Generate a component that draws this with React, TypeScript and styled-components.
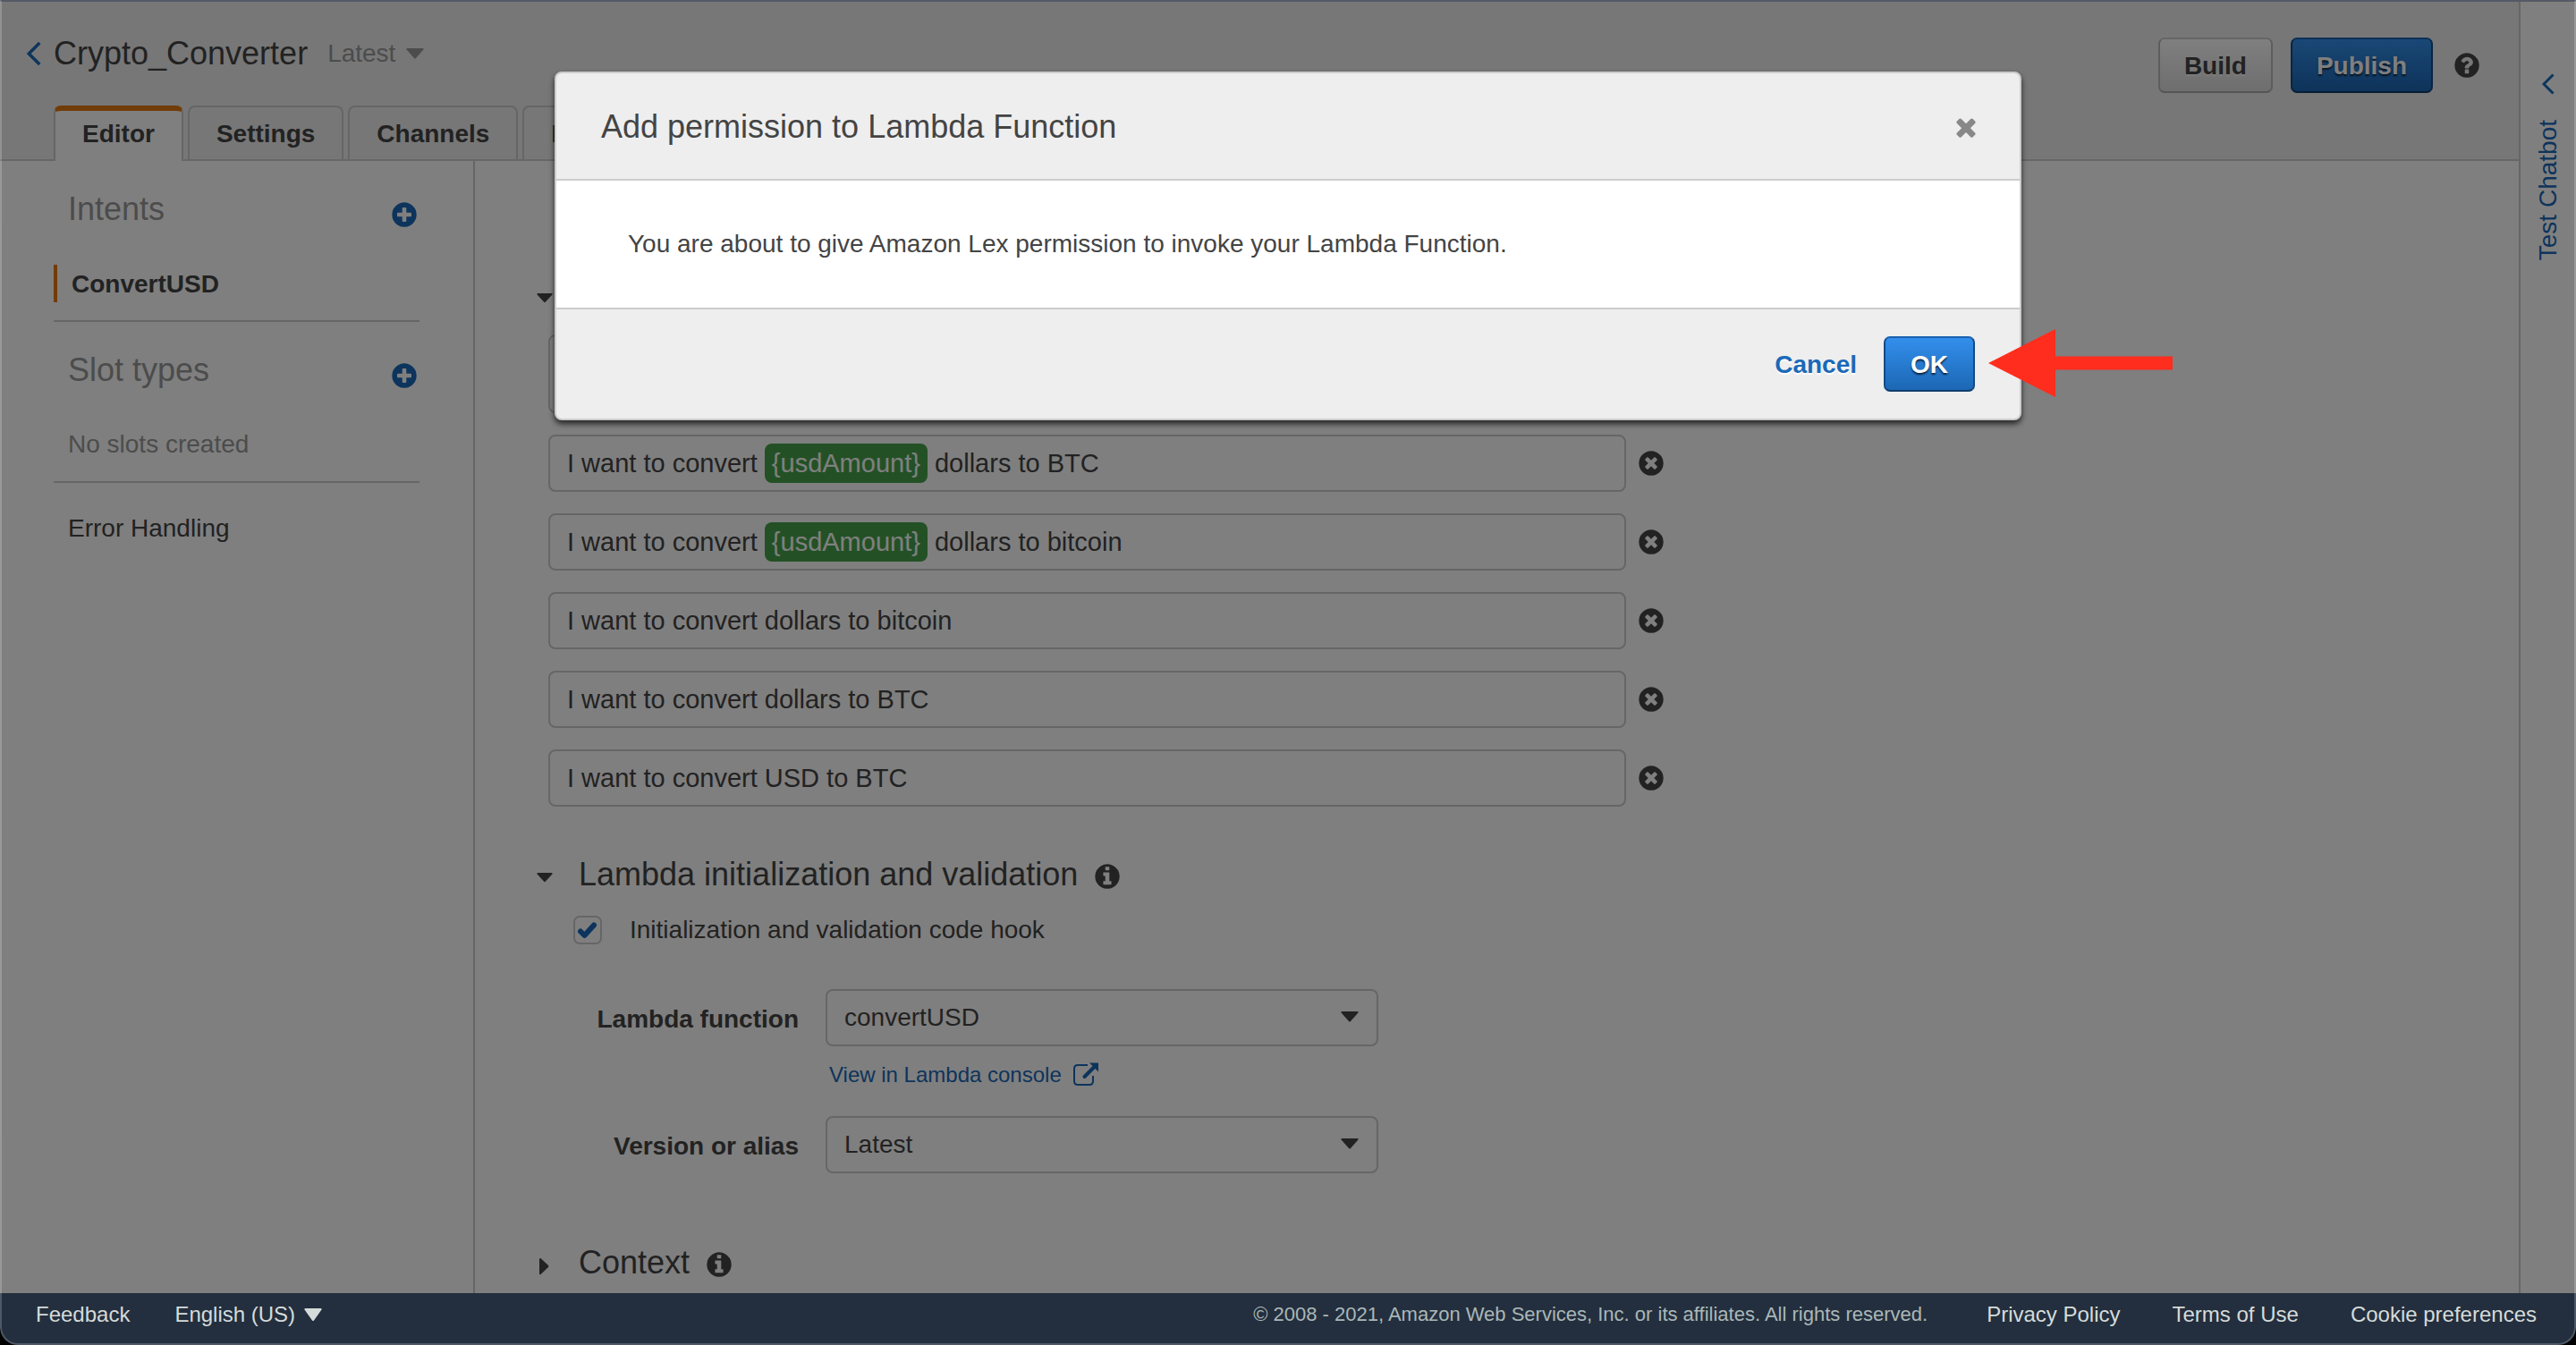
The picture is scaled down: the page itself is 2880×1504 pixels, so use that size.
import React from 'react';
import styled, { createGlobalStyle, css } from 'styled-components';

const color = {
  text: '#444444',
  muted: '#999999',
  line: '#cccccc',
  panel: '#eeeeee',
  link: '#1a69b8',
  orange: '#e47911',
  token: '#46a34a',
  footer: '#232f3e',
  footerText: '#d5dbdb',
};

const GlobalStyle = createGlobalStyle`
  *, *::before, *::after { box-sizing: border-box; }
  html, body { margin: 0; background: #000; }
  body {
    font-family: "Liberation Sans", Arial, Helvetica, sans-serif;
    font-size: 28px;
    color: ${color.text};
  }
  button, input, select, textarea { font: inherit; color: inherit; margin: 0; }
  h1, h2, p { margin: 0; font-weight: 400; }
  svg { display: block; flex: none; }
`;

/* ---------- icons ---------- */

const disc =
  'q0 209-103 385.5t-279.5 279.5-385.500 103-385.500-103-279.500-279.500-103-385.500 103-385.500 279.500-279.500 385.500-103 385.500 103 279.500 279.500 103 385.500z';

const glyphs = {
  plus:
    'M1344 960v-128q0-26-19-45t-45-19h-256v-256q0-26-19-45t-45-19h-128q-26 0-45 19t-19 45v256h-256q-26 0-45 19t-19 45v128q0 26 19 45t45 19h256v256q0 26 19 45t45 19h128q26 0 45-19t19-45v-256h256q26 0 45-19t19-45zm320-64' +
    disc,
  remove:
    'M1277 1122q0-26-19-45l-181-181 181-181q19-19 19-45 0-27-19-46l-90-90q-19-19-46-19-26 0-45 19l-181 181-181-181q-19-19-45-19-27 0-46 19l-90 90q-19 19-19 46 0 26 19 45l181 181-181 181q-19 19-19 45 0 27 19 46l90 90q19 19 46 19 26 0 45-19l181-181 181 181q19 19 45 19 27 0 46-19l90-90q19-19 19-46zm387-226' +
    disc,
  info:
    'M1152 1376v-160q0-14-9-23t-23-9h-96v-512q0-14-9-23t-23-9h-320q-14 0-23 9t-9 23v160q0 14 9 23t23 9h96v320h-96q-14 0-23 9t-9 23v160q0 14 9 23t23 9h448q14 0 23-9t9-23zm-128-896v-160q0-14-9-23t-23-9h-192q-14 0-23 9t-9 23v160q0 14 9 23t23 9h192q14 0 23-9t9-23zm640 416' +
    disc,
  help:
    'M1024 1376v-192q0-14-9-23t-23-9h-192q-14 0-23 9t-9 23v192q0 14 9 23t23 9h192q14 0 23-9t9-23zm256-672q0-88-55.5-163t-138.5-116-170-41q-243 0-371 213-15 24 8 42l132 100q7 6 19 6 16 0 25-12 53-68 86-92 34-24 86-24 48 0 85.5 26t37.5 59q0 38-20 61t-68 45q-63 28-115.5 86.5t-52.5 125.5v36q0 14 9 23t23 9h192q14 0 23-9t9-23q0-19 21.5-49.5t54.5-49.5q32-18 49-28.5t46-35 44.5-48 28-60.5 12.5-81zm384 192' +
    disc,
  close:
    'M1490 1322q0 40-28 68l-136 136q-28 28-68 28t-68-28l-294-294-294 294q-28 28-68 28t-68-28l-136-136q-28-28-28-68t28-68l294-294-294-294q-28-28-28-68t28-68l136-136q28-28 68-28t68 28l294 294 294-294q28-28 68-28t68 28l136 136q28 28 28 68t-28 68l-294 294 294 294q28 28 28 68z',
};

function Glyph({ name }: { name: keyof typeof glyphs }) {
  return (
    <svg width="32" height="32" viewBox="0 0 1792 1792" fill="currentColor" aria-hidden="true">
      <path d={glyphs[name]} />
    </svg>
  );
}

function DownCaret() {
  return (
    <svg width="20" height="12" viewBox="0 0 20 12" fill="currentColor" aria-hidden="true">
      <path d="M1 0h18q1 .6 .4 1.400L11 11q-1 1-2 0L.600 1.400Q0 .6 1 0z" />
    </svg>
  );
}

function SectionCaret({ open }: { open: boolean }) {
  return (
    <svg width="18" height="32" viewBox="0 0 18 32" fill="currentColor" aria-hidden="true">
      {open ? (
        <path d="M1 14h16q1 .6.4 1.400l-7.600 8.400q-.8.8-1.600 0L.6 15.400Q0 14.600 1 14z" />
      ) : (
        <path d="M3 11.500q.8-1 1.500-.4l8.500 8q.8.900 0 1.800l-8.500 8q-.8.600-1.500-.4z" />
      )}
    </svg>
  );
}

function Chevron({ size, weight }: { size: 'large' | 'small'; weight: number }) {
  return (
    <svg
      width={size === 'large' ? 16 : 14}
      height={size === 'large' ? 28 : 24}
      viewBox="0 0 14 24"
      fill="none"
      stroke="currentColor"
      strokeWidth={weight}
      aria-hidden="true"
    >
      <path d="M12.500 1.500L2 12l10.500 10.500" />
    </svg>
  );
}

function ExternalIcon() {
  return (
    <svg width="28" height="28" viewBox="0 0 28 28" fill="none" stroke="currentColor" aria-hidden="true">
      <path d="M16 3H5q-4 0-4 4v14q0 4 4 4h13q4 0 4-4v-6" strokeWidth="2" />
      <path d="M12.500 16L23 5.500" strokeWidth="4" strokeLinecap="round" />
      <path d="M18 .5h10v10z" fill="currentColor" stroke="none" />
    </svg>
  );
}

/* ---------- frame ---------- */

const Shell = styled.div`
  position: relative;
  display: flex;
  flex-direction: column;
  min-height: 100vh;
  overflow: hidden;
  border-radius: 0 0 20px 20px;

  &::after {
    content: '';
    position: absolute;
    inset: 0;
    pointer-events: none;
    border: 2px solid rgba(255, 255, 255, 0.2);
    border-top-color: #555a66;
    border-radius: 0 0 20px 20px;
  }
`;

const Workspace = styled.div`
  position: relative;
  flex: 1;
  display: flex;
  background: #fff;
`;

const Page = styled.div`
  flex: 1;
  min-width: 0;
  display: flex;
  flex-direction: column;
`;

const Columns = styled.div`
  flex: 1;
  display: flex;
`;

const IconButton = styled.button<{ $tone?: string }>`
  display: flex;
  padding: 0;
  border: 0;
  background: none;
  color: ${(p) => p.$tone || color.text};
  cursor: pointer;
`;

/* ---------- header ---------- */

const Header = styled.header`
  display: flex;
  justify-content: space-between;
  min-height: 180px;
  background: ${color.panel};
  box-shadow: inset 0 -2px 0 ${color.line};
`;

const HeaderMain = styled.div`
  display: flex;
  flex-direction: column;
  justify-content: space-between;
  padding-top: 38px;
`;

const TitleRow = styled.div`
  display: flex;
  align-items: center;
  padding-left: 30px;
`;

const BackLink = styled.a`
  color: ${color.link};
  margin-right: 14px;
`;

const BotName = styled.h1`
  font-size: 36px;
  line-height: 44px;
  margin-right: 22px;
`;

const VersionButton = styled.button`
  display: flex;
  align-items: center;
  gap: 12px;
  padding: 0;
  border: 0;
  background: none;
  line-height: 44px;
  color: ${color.muted};
`;

const Tabs = styled.nav`
  display: flex;
  gap: 5px;
  padding-left: 60px;
`;

const Tab = styled.button<{ $active?: boolean }>`
  height: 60px;
  padding: 10px 30px 8px;
  border: 2px solid ${color.line};
  border-bottom: 0;
  border-radius: 8px 8px 0 0;
  background: ${color.panel};
  font-weight: 700;
  line-height: 40px;
  ${(p) =>
    p.$active &&
    css`
      height: 62px;
      padding: 6px 30px 10px;
      border-top: 6px solid ${color.orange};
      background: #fff;
    `}
`;

const Actions = styled.div`
  display: flex;
  align-items: center;
  gap: 20px;
  height: 62px;
  margin: 42px 40px 0 0;
`;

const HelpSlot = styled.div`
  padding: 0 2px;
`;

const Button = styled.button<{ $primary?: boolean }>`
  min-width: 102px;
  height: 62px;
  padding: 2px 27px 0;
  border: 2px solid;
  border-radius: 7px;
  font-weight: 700;
  line-height: 56px;
  ${(p) =>
    p.$primary
      ? css`
          border-color: #1a60b0 #134a85 #0f3c6c;
          background: linear-gradient(#338fec, #1c67b4);
          color: #fff;
          text-shadow: 0 2px 2px rgba(0, 0, 0, 0.7);
        `
      : css`
          border-color: #cccccc #bbbbbb #aaaaaa;
          background: linear-gradient(#ffffff, #dddddd);
          color: ${color.text};
          text-shadow: 0 2px 2px rgba(255, 255, 255, 0.7);
        `}
`;

/* ---------- sidebar ---------- */

const Sidebar = styled.aside`
  flex: none;
  width: 531px;
  padding: 0 60px;
  border-right: 2px solid ${color.line};
`;

const SideSection = styled.section`
  padding: 32px 0 20px;
  border-bottom: 2px solid ${color.line};
`;

const SideHeading = styled.div`
  display: flex;
  align-items: flex-end;
  justify-content: space-between;
  height: 44px;
  margin-bottom: 40px;
  padding: 0 1px 0 16px;
  color: ${color.muted};

  h2 {
    font-size: 36px;
    line-height: 44px;
  }
`;

const IntentLink = styled.a`
  display: block;
  padding: 2px 0 0 16px;
  border-left: 4px solid ${color.orange};
  color: ${color.text};
  font-weight: 700;
  line-height: 40px;
  text-decoration: none;
`;

const SideText = styled.p`
  padding-left: 16px;
  line-height: 42px;
  color: ${color.muted};
`;

const SideLink = styled.a`
  display: block;
  margin-top: 30px;
  padding-left: 16px;
  line-height: 42px;
  color: ${color.text};
  text-decoration: none;
`;

/* ---------- editor ---------- */

const Editor = styled.main`
  flex: 1;
  min-width: 0;
  padding: 128px 69px 12px;
`;

const SectionHeader = styled.div<{ $gap?: number }>`
  display: flex;
  align-items: center;
  gap: 29px;
  height: 44px;
  margin-top: ${(p) => p.$gap || 0}px;
`;

const SectionTitle = styled.div`
  display: flex;
  align-items: center;
  gap: 17px;

  h2 {
    font-size: 36px;
    line-height: 44px;
  }
`;

const InfoButton = styled(IconButton)`
  padding-top: 4px;
`;

const Utterances = styled.div`
  display: flex;
  flex-direction: column;
  gap: 24px;
  max-width: 1262px;
  padding: 22px 0 0 13px;
`;

const UtteranceRow = styled.div`
  display: flex;
  align-items: center;
  gap: 12px;
`;

const fieldBox = css`
  flex: 1;
  min-width: 0;
  height: 64px;
  padding: 0 19px;
  border: 2px solid ${color.line};
  border-radius: 8px;
  background: #fff;
  font-size: 29px;
  line-height: 60px;
`;

const UtteranceInput = styled.input`
  ${fieldBox}
`;

const UtteranceRich = styled.div`
  ${fieldBox}
`;

const NewUtterance = styled.textarea`
  ${fieldBox}
  height: 88px;
  margin-right: 44px;
  resize: none;
`;

const Token = styled.span`
  display: inline-block;
  padding: 0 8px;
  border-radius: 8px;
  background: ${color.token};
  color: #fff;
  line-height: 44px;
`;

const CheckLabel = styled.label`
  display: flex;
  align-items: center;
  gap: 31px;
  height: 32px;
  margin: 24px 0 50px 41px;
`;

const CheckBoxWrap = styled.span`
  position: relative;
  width: 32px;
  height: 32px;
  color: ${color.link};

  input {
    appearance: none;
    display: block;
    width: 32px;
    height: 32px;
    border: 2px solid ${color.line};
    border-radius: 7px;
    background: #fff;
  }

  svg {
    position: absolute;
    inset: 0;
    pointer-events: none;
  }
`;

const FormGrid = styled.div`
  display: grid;
  grid-template-columns: 293px minmax(0, 618px);
  column-gap: 30px;
  row-gap: 32px;
`;

const FieldLabel = styled.label`
  padding-top: 4px;
  font-weight: 700;
  line-height: 60px;
  text-align: right;
`;

const SelectWrap = styled.div`
  position: relative;

  select {
    appearance: none;
    display: block;
    width: 100%;
    height: 64px;
    padding: 0 60px 0 19px;
    border: 2px solid ${color.line};
    border-radius: 8px;
    background: #fff;
    line-height: 60px;
  }

  svg {
    position: absolute;
    top: 25px;
    right: 22px;
    pointer-events: none;
  }
`;

const ConsoleLink = styled.a`
  display: flex;
  align-items: center;
  gap: 13px;
  width: fit-content;
  margin: 18px 0 0 4px;
  color: ${color.link};
  font-size: 24px;
  line-height: 28px;
  text-decoration: none;
`;

/* ---------- test panel ---------- */

const ChatPanel = styled.aside`
  flex: none;
  width: 64px;
  padding-top: 82px;
  border-left: 2px solid ${color.line};
`;

const ChatToggle = styled.button`
  display: flex;
  flex-direction: column;
  align-items: center;
  gap: 28px;
  width: 100%;
  padding: 0;
  border: 0;
  background: none;
  color: ${color.link};

  span {
    writing-mode: vertical-rl;
    transform: rotate(180deg);
    line-height: 32px;
  }
`;

/* ---------- dialog ---------- */

const Scrim = styled.div`
  position: absolute;
  inset: 0;
  display: flex;
  justify-content: center;
  align-items: flex-start;
  padding-top: 80px;
  background: rgba(0, 0, 0, 0.5);
`;

const Dialog = styled.div`
  position: relative;
  width: 1640px;
  max-width: 90%;
  border: 2px solid ${color.line};
  border-radius: 8px;
  background: ${color.panel};
  box-shadow: 0 4px 6px rgba(0, 0, 0, 0.7);
`;

const DialogHeader = styled.div`
  display: flex;
  align-items: center;
  justify-content: space-between;
  padding: 38px 44px 36px 50px;

  h2 {
    font-size: 36px;
    line-height: 44px;
  }
`;

const DialogBody = styled.p`
  padding: 50px 80px;
  border: solid ${color.line};
  border-width: 2px 0;
  background: #fff;
  line-height: 42px;
`;

const DialogFooter = styled.div`
  display: flex;
  align-items: center;
  justify-content: flex-end;
  gap: 30px;
  padding: 30px 50px;
`;

const CancelButton = styled.button`
  padding: 2px 0 0;
  border: 0;
  background: none;
  color: ${color.link};
  font-weight: 700;
  text-shadow: 0 2px 0 #fff;
`;

const Pointer = styled.svg`
  position: absolute;
  left: calc(100% - 35px);
  bottom: 24px;
`;

/* ---------- footer ---------- */

const Footer = styled.footer`
  display: flex;
  justify-content: space-between;
  padding: 8px 44px 18px 40px;
  background: ${color.footer};
  color: ${color.footerText};
  font-size: 24px;
  line-height: 32px;
`;

const FooterGroup = styled.div<{ $gap: number }>`
  display: flex;
  align-items: center;
  gap: ${(p) => p.$gap}px;

  a {
    color: inherit;
    text-decoration: none;
  }
`;

const LanguageButton = styled.button`
  display: flex;
  align-items: center;
  gap: 10px;
  padding: 0;
  border: 0;
  background: none;
`;

const Copyright = styled.span`
  margin-right: 8px;
  color: #aab7b8;
  font-size: 22px;
`;

const tabs = ['Editor', 'Settings', 'Channels', 'Monitoring'];

const utterances = [
  { before: 'I want to convert ', slot: '{usdAmount}', after: ' dollars to BTC' },
  { before: 'I want to convert ', slot: '{usdAmount}', after: ' dollars to bitcoin' },
  { before: 'I want to convert dollars to bitcoin' },
  { before: 'I want to convert dollars to BTC' },
  { before: 'I want to convert USD to BTC' },
];

export default function App() {
  return (
    <>
      <GlobalStyle />
      <Shell>
        <Workspace>
          <Page>
            <Header>
              <HeaderMain>
                <TitleRow>
                  <BackLink href="#bots" aria-label="Back">
                    <Chevron size="large" weight={3} />
                  </BackLink>
                  <BotName>Crypto_Converter</BotName>
                  <VersionButton type="button">
                    Latest
                    <DownCaret />
                  </VersionButton>
                </TitleRow>
                <Tabs>
                  {tabs.map((name, i) => (
                    <Tab key={name} type="button" $active={i === 0}>
                      {name}
                    </Tab>
                  ))}
                </Tabs>
              </HeaderMain>
              <Actions>
                <Button type="button">Build</Button>
                <Button type="button" $primary>
                  Publish
                </Button>
                <HelpSlot>
                  <IconButton type="button" aria-label="Help">
                    <Glyph name="help" />
                  </IconButton>
                </HelpSlot>
              </Actions>
            </Header>
            <Columns>
              <Sidebar>
                <SideSection>
                  <SideHeading>
                    <h2>Intents</h2>
                    <IconButton type="button" $tone={color.link} aria-label="Add intent">
                      <Glyph name="plus" />
                    </IconButton>
                  </SideHeading>
                  <IntentLink href="#convert-usd">ConvertUSD</IntentLink>
                </SideSection>
                <SideSection>
                  <SideHeading>
                    <h2>Slot types</h2>
                    <IconButton type="button" $tone={color.link} aria-label="Add slot type">
                      <Glyph name="plus" />
                    </IconButton>
                  </SideHeading>
                  <SideText>No slots created</SideText>
                </SideSection>
                <SideLink href="#errors">Error Handling</SideLink>
              </Sidebar>
              <Editor>
                <SectionHeader>
                  <IconButton type="button" aria-label="Toggle utterances">
                    <SectionCaret open />
                  </IconButton>
                </SectionHeader>
                <Utterances>
                  <UtteranceRow>
                    <NewUtterance aria-label="New utterance" />
                  </UtteranceRow>
                  {utterances.map((u, i) => (
                    <UtteranceRow key={i}>
                      {u.slot ? (
                        <UtteranceRich role="textbox" aria-label="Utterance" tabIndex={0}>
                          {u.before}
                          <Token>{u.slot}</Token>
                          {u.after}
                        </UtteranceRich>
                      ) : (
                        <UtteranceInput type="text" aria-label="Utterance" defaultValue={u.before} />
                      )}
                      <IconButton type="button" aria-label="Remove utterance">
                        <Glyph name="remove" />
                      </IconButton>
                    </UtteranceRow>
                  ))}
                </Utterances>

                <SectionHeader $gap={54}>
                  <IconButton type="button" aria-label="Toggle Lambda section">
                    <SectionCaret open />
                  </IconButton>
                  <SectionTitle>
                    <h2>Lambda initialization and validation</h2>
                    <InfoButton type="button" aria-label="About Lambda">
                      <Glyph name="info" />
                    </InfoButton>
                  </SectionTitle>
                </SectionHeader>
                <CheckLabel>
                  <CheckBoxWrap>
                    <input type="checkbox" defaultChecked />
                    <svg width="32" height="32" viewBox="0 0 32 32" fill="none" stroke="currentColor" aria-hidden="true">
                      <path d="M8 17.500l4.500 4.500L23 10.500" strokeWidth="6" strokeLinecap="round" strokeLinejoin="round" />
                    </svg>
                  </CheckBoxWrap>
                  Initialization and validation code hook
                </CheckLabel>
                <FormGrid>
                  <FieldLabel htmlFor="lambda-function">Lambda function</FieldLabel>
                  <div>
                    <SelectWrap>
                      <select id="lambda-function" defaultValue="convertUSD">
                        <option>convertUSD</option>
                      </select>
                      <DownCaret />
                    </SelectWrap>
                    <ConsoleLink href="#lambda-console">
                      View in Lambda console
                      <ExternalIcon />
                    </ConsoleLink>
                  </div>
                  <FieldLabel htmlFor="lambda-version">Version or alias</FieldLabel>
                  <SelectWrap>
                    <select id="lambda-version" defaultValue="Latest">
                      <option>Latest</option>
                    </select>
                    <DownCaret />
                  </SelectWrap>
                </FormGrid>

                <SectionHeader $gap={78}>
                  <IconButton type="button" aria-label="Toggle Context section">
                    <SectionCaret open={false} />
                  </IconButton>
                  <SectionTitle>
                    <h2>Context</h2>
                    <InfoButton type="button" aria-label="About Context">
                      <Glyph name="info" />
                    </InfoButton>
                  </SectionTitle>
                </SectionHeader>
              </Editor>
            </Columns>
          </Page>

          <ChatPanel>
            <ChatToggle type="button">
              <Chevron size="small" weight={3} />
              <span>Test Chatbot</span>
            </ChatToggle>
          </ChatPanel>

          <Scrim>
            <Dialog role="dialog" aria-modal="true" aria-labelledby="dialog-title">
              <DialogHeader>
                <h2 id="dialog-title">Add permission to Lambda Function</h2>
                <IconButton type="button" $tone="#888888" aria-label="Close">
                  <Glyph name="close" />
                </IconButton>
              </DialogHeader>
              <DialogBody>You are about to give Amazon Lex permission to invoke your Lambda Function.</DialogBody>
              <DialogFooter>
                <CancelButton type="button">Cancel</CancelButton>
                <Button type="button" $primary>
                  OK
                </Button>
              </DialogFooter>
              <Pointer width="206" height="76" viewBox="0 0 206 76" fill="#ff2d1e" aria-hidden="true">
                <path d="M0 38L75 0v30.500h131v15H75V76z" />
              </Pointer>
            </Dialog>
          </Scrim>
        </Workspace>

        <Footer>
          <FooterGroup $gap={50}>
            <a href="#feedback">Feedback</a>
            <LanguageButton type="button">
              English (US)
              <svg width="20" height="16" viewBox="0 0 20 16" fill="currentColor" aria-hidden="true">
                <path d="M1 1h18q1 .6.5 1.500L11 14.500q-1 1.200-2 0L.5 2.500Q0 1.600 1 1z" />
              </svg>
            </LanguageButton>
          </FooterGroup>
          <FooterGroup $gap={58}>
            <Copyright>© 2008 - 2021, Amazon Web Services, Inc. or its affiliates. All rights reserved.</Copyright>
            <a href="#privacy">Privacy Policy</a>
            <a href="#terms">Terms of Use</a>
            <a href="#cookies">Cookie preferences</a>
          </FooterGroup>
        </Footer>
      </Shell>
    </>
  );
}
